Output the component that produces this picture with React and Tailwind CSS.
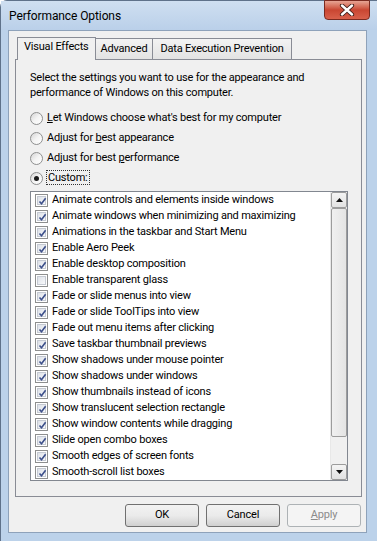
import React from 'react';

const font = { fontFamily: 'Roboto, "Liberation Sans", Arial, sans-serif' };

const effects = [
  ['Animate controls and elements inside windows', true],
  ['Animate windows when minimizing and maximizing', true],
  ['Animations in the taskbar and Start Menu', true],
  ['Enable Aero Peek', true],
  ['Enable desktop composition', true],
  ['Enable transparent glass', false],
  ['Fade or slide menus into view', true],
  ['Fade or slide ToolTips into view', true],
  ['Fade out menu items after clicking', true],
  ['Save taskbar thumbnail previews', true],
  ['Show shadows under mouse pointer', true],
  ['Show shadows under windows', true],
  ['Show thumbnails instead of icons', true],
  ['Show translucent selection rectangle', true],
  ['Show window contents while dragging', true],
  ['Slide open combo boxes', true],
  ['Smooth edges of screen fonts', true],
  ['Smooth-scroll list boxes', true],
];

const Radio = ({ checked, children }) => (
  <div className="h-[20px] flex items-center">
    <div className="w-[13px] h-[13px] rounded-full border border-[#8e8f8f] bg-gradient-to-br from-[#d4d4d4] via-[#f4f4f4] to-white flex items-center justify-center shrink-0">
      {checked && <div className="w-[5px] h-[5px] rounded-full bg-[#1a1a1a]" />}
    </div>
    <div className="ml-[4px]">{children}</div>
  </div>
);

const Checkbox = ({ checked }) => (
  <div className="w-[13px] h-[13px] border border-[#8e8f8f] bg-white p-[1px] shrink-0">
    <div className="w-full h-full border border-[#c5cad3] bg-gradient-to-br from-[#dde1e8] to-[#f8f9fb] relative">
      {checked && (
        <svg width="9" height="9" viewBox="0 0 9 9" className="absolute left-[0px] top-[0px]">
          <path d="M1.5 4.5 L3.5 6.8 L7.6 1.2" stroke="#3c4f8a" strokeWidth="1.6" fill="none" />
        </svg>
      )}
    </div>
  </div>
);

const Arrow = ({ up }) => (
  <div className="h-[16px] border border-[#9c9c9c] bg-gradient-to-b from-[#f4f4f4] to-[#e2e2e2] rounded-[2px] flex items-center justify-center">
    <svg width="7" height="4" viewBox="0 0 7 4">
      <path d={up ? 'M0 4 L3.5 0 L7 4 Z' : 'M0 0 L3.5 4 L7 0 Z'} fill="#111" />
    </svg>
  </div>
);

const Button = ({ children, disabled }) => (
  <div
    className={`w-[74px] h-[23px] rounded-[3px] border flex items-center justify-center ${
      disabled
        ? 'border-[#adb2b5] bg-[#f4f4f4] text-[#8b8b8b]'
        : 'border-[#707070] bg-gradient-to-b from-[#f2f2f2] via-[#ebebeb] to-[#d0d0d0] text-black'
    }`}
  >
    {children}
  </div>
);

export default function App() {
  return (
    <div className="w-[377px] h-[541px] bg-[#bcd2ea] rounded-tl-[7px] border-l border-t border-[#5f728a] flex flex-col text-[11px] tracking-[-0.2px] text-black" style={font}>
      {/* title bar */}
      <div className="h-[29px] relative flex items-center pl-[8px] bg-gradient-to-b from-[#cfdff1] to-[#bad0e9]">
        <span className="text-[12px] tracking-[-0.1px] text-black">Performance Options</span>
        <div className="absolute top-[-1px] right-[7px] w-[46px] h-[20px] rounded-b-[4px] border border-[#7a2a20] bg-gradient-to-b from-[#e6a494] via-[#c94632] to-[#d8604b] flex items-center justify-center">
          <svg width="16" height="12" viewBox="0 0 16 12">
            <path d="M3 1.5 L13 10.5 M13 1.5 L3 10.5" stroke="#3a1a15" strokeWidth="4.2" strokeLinecap="round" />
            <path d="M3 1.5 L13 10.5 M13 1.5 L3 10.5" stroke="#ffffff" strokeWidth="2.4" strokeLinecap="round" />
          </svg>
        </div>
      </div>

      <div className="flex flex-1 pl-[7px] pr-[10px] pb-[8px]">
        <div className="flex-1 bg-[#f0f0f0] border border-[#8ea2ba] flex flex-col pl-[6px] pr-[4px]">
          {/* tabs */}
          <div className="flex items-end h-[28px] pl-[2px] relative z-10">
            <div className="h-[23px] -mb-[1px] px-[6px] border border-b-0 border-[#898c95] bg-[#f0f0f0] flex items-center pb-[3px]">Visual Effects</div>
            <div className="h-[21px] px-[5px] border border-l-0 border-b-0 border-[#898c95] bg-gradient-to-b from-[#f3f3f3] to-[#e3e3e3] flex items-center">Advanced</div>
            <div className="h-[21px] px-[7px] border border-l-0 border-b-0 border-[#898c95] bg-gradient-to-b from-[#f3f3f3] to-[#e3e3e3] flex items-center">Data Execution Prevention</div>
          </div>

          {/* panel */}
          <div className="h-[438px] border border-[#898c95] bg-[#f0f0f0] pl-[14px] pr-[13px] pt-[10px] flex flex-col">
            <p className="leading-[15px] pr-[20px]">
              Select the settings you want to use for the appearance and performance of Windows on this computer.
            </p>
            <div className="mt-[8px] flex flex-col">
              <Radio><span className="underline">L</span>et Windows choose what's best for my computer</Radio>
              <Radio>Adjust for <span className="underline">b</span>est appearance</Radio>
              <Radio>Adjust for best <span className="underline">p</span>erformance</Radio>
              <Radio checked>
                <span className="outline outline-1 outline-dotted outline-[#333] px-[1px]">Custom:</span>
              </Radio>
            </div>

            {/* list */}
            <div className="mt-[3px] h-[290px] border border-[#828790] bg-white flex">
              <div className="flex-1 flex flex-col pl-[4px]">
                {effects.map(([label, on]) => (
                  <div key={label} className="h-[16px] flex items-center gap-[4px] whitespace-nowrap">
                    <Checkbox checked={on} />
                    <span>{label}</span>
                  </div>
                ))}
              </div>
              <div className="w-[17px] bg-[#f0f0f0] border-l border-[#e8e8e8] flex flex-col">
                <Arrow up />
                <div className="h-[229px] border border-[#9c9c9c] bg-gradient-to-r from-[#f0f0f0] to-[#e4e4e4] rounded-[2px]" />
                <div className="flex-1" />
                <Arrow />
              </div>
            </div>
          </div>

          {/* buttons */}
          <div className="flex justify-end gap-[7px] mt-[7px] pr-[1px]">
            <Button>OK</Button>
            <Button>Cancel</Button>
            <Button disabled><span className="underline">A</span>pply</Button>
          </div>
        </div>
      </div>
    </div>
  );
}
